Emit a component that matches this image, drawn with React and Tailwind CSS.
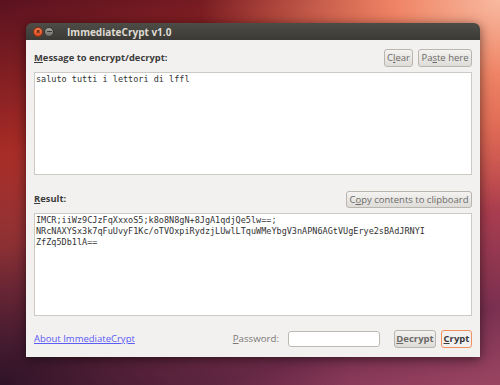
import React from "react";

const ui = "font-['Open_Sans','DejaVu_Sans',sans-serif]";
const mono = "font-['DejaVu_Sans_Mono','Liberation_Mono',monospace]";

// GTK-ish push button
const Btn = ({ children, className = "" }) => (
  <button
    className={`flex items-center justify-center rounded-[3px] border border-[#b9b6b0] bg-gradient-to-b from-[#f4f3f1] to-[#dedcd8] text-[9.5px] text-[#6b6a67] leading-none ${className}`}
  >
    <span className="whitespace-nowrap">{children}</span>
  </button>
);

const App = () => {
  const result = [
    "IMCR;iiWz9CJzFqXxxoS5;k8o8N8gN+8JgA1qdjQe5lw==;",
    "NRcNAXYSx3k7qFuUvyF1Kc/oTVOxpiRydzjLUwlLTquWMeYbgV3nAPN6AGtVUgErye2sBAdJRNYI",
    "ZfZq5Db1lA==",
  ];

  return (
    <div
      className={`w-[500px] h-[385px] overflow-hidden pt-[23px] pl-[26px] ${ui} bg-[radial-gradient(ellipse_60%_55%_at_100%_0%,#f8b99f_0%,#ef8465_35%,transparent_100%),radial-gradient(ellipse_70%_60%_at_0%_100%,#2f1328_0%,transparent_100%),linear-gradient(165deg,#5a1220_0%,#a42a25_28%,#c8433c_48%,#a53c50_68%,#7a3050_85%,#9a4562_100%)]`}
    >
      <div className="w-[454px] h-[334px] flex flex-col rounded-t-[6px] overflow-hidden shadow-[0_2px_12px_rgba(0,0,0,0.55)]">
        {/* Title bar */}
        <div className="h-[17px] flex items-center px-[7px] gap-[1px] bg-gradient-to-b from-[#4d4c47] to-[#3b3a36]">
          <span className="w-[10px] h-[10px] rounded-full bg-gradient-to-b from-[#f47e4f] to-[#d9481e] border border-[#8f2f12] flex items-center justify-center text-[7px] leading-none text-[#3a1408] font-bold">
            ×
          </span>
          <span className="w-[10px] h-[10px] rounded-full bg-gradient-to-b from-[#a6a49e] to-[#6f6d68] border border-[#3a3935] flex items-center justify-center">
            <span className="w-[5px] h-[1.5px] bg-[#3a3935]" />
          </span>
          <span className="ml-[12px] text-[10px] font-bold text-[#dfdbd2] leading-none">
            ImmediateCrypt v1.0
          </span>
        </div>

        {/* Body */}
        <div className="flex-1 flex flex-col bg-[#f2f1f0] px-[8px] pt-[9px]">
          <div className="h-[18px] flex items-center">
            <span className="text-[9.4px] font-bold text-[#3c3c3c]">
              <span className="underline">M</span>essage to encrypt/decrypt:
            </span>
            <div className="ml-auto flex gap-[5px]">
              <Btn className="w-[29px] h-[18px]">
                C<span className="underline">l</span>ear
              </Btn>
              <Btn className="w-[54px] h-[18px]">
                Pa<span className="underline">s</span>te here
              </Btn>
            </div>
          </div>

          <div className={`mt-[5px] h-[103px] bg-white border border-[#cdcac5] px-[1px] pt-[1px] text-[8.5px] leading-[11px] text-[#333] ${mono}`}>
            saluto tutti i lettori di lffl
          </div>

          <div className="mt-[16px] h-[17px] flex items-center">
            <span className="text-[9.4px] font-bold text-[#3c3c3c]">
              <span className="underline">R</span>esult:
            </span>
            <Btn className="ml-auto w-[126px] h-[17px]">
              C<span className="underline">o</span>py contents to clipboard
            </Btn>
          </div>

          <div className={`mt-[5px] h-[103px] bg-white border border-[#cdcac5] px-[1px] pt-[1px] text-[8.5px] leading-[11px] text-[#333] whitespace-pre ${mono}`}>
            {result.map((l) => (
              <div key={l}>{l}</div>
            ))}
          </div>

          <div className="mt-[14px] h-[18px] flex items-center">
            <span className="text-[9.5px] text-[#5b5bf5] underline">About ImmediateCrypt</span>
            <span className="ml-auto text-[9.7px] text-[#7b7a77]">
              <span className="underline">P</span>assword:
            </span>
            <div className="ml-[9px] w-[92px] h-[16px] bg-white border border-[#bcb9b3] rounded-[3px]" />
            <Btn className="ml-[14px] w-[42px] h-[18px] font-bold text-[#3c3c3c] from-[#e9e8e5] to-[#d3d1cc]">
              <span className="underline">D</span>ecrypt
            </Btn>
            <button className="ml-[5px] w-[31px] h-[18px] flex items-center justify-center rounded-[3px] border border-[#f0915f] bg-[#f2f1f0] text-[9.5px] font-bold text-[#3c3c3c] leading-none">
              <span className="whitespace-nowrap">
                <span className="underline">C</span>rypt
              </span>
            </button>
          </div>
        </div>
      </div>
    </div>
  );
};

export default App;
